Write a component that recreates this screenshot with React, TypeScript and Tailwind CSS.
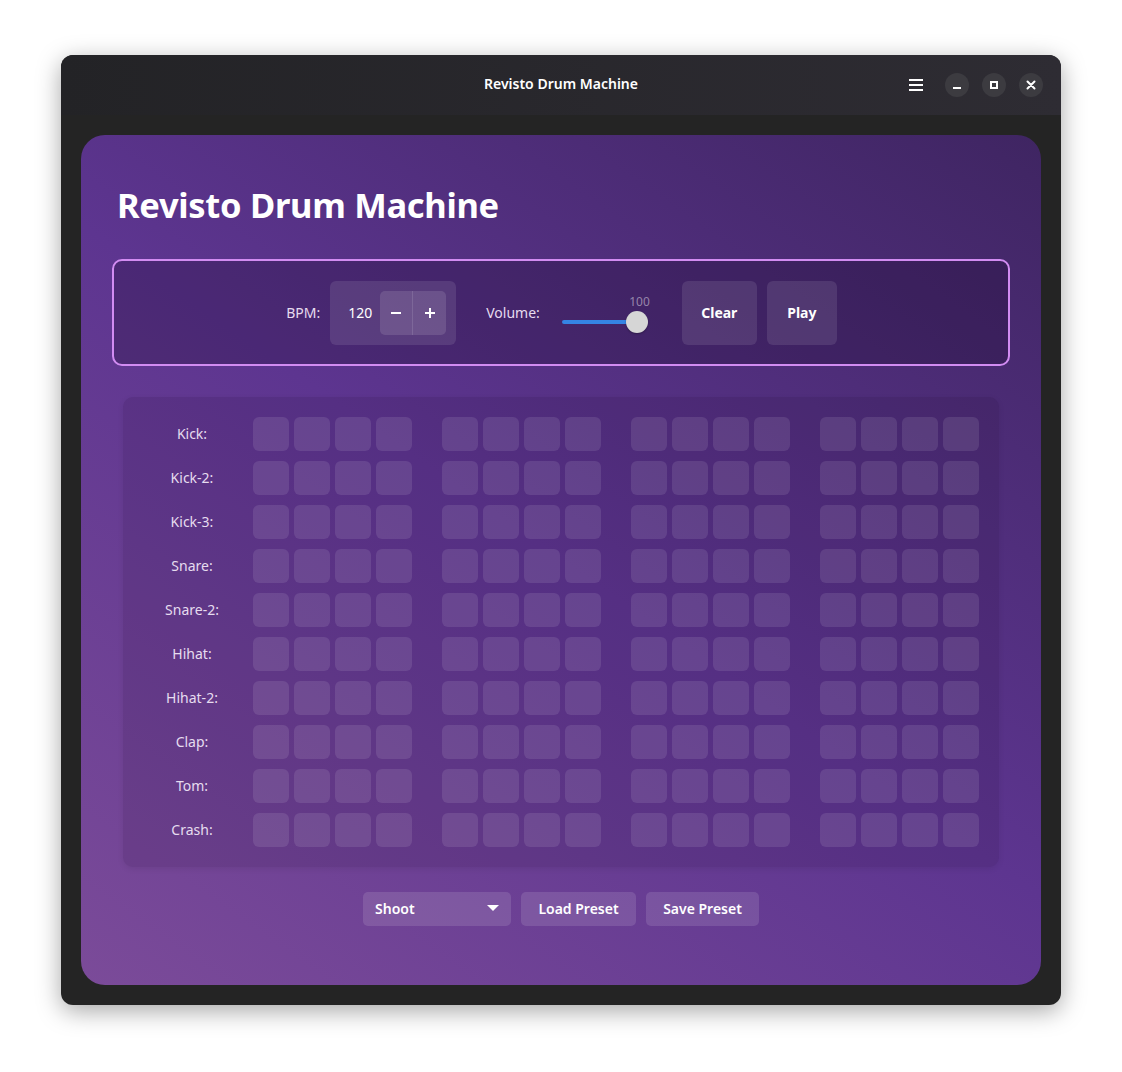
import React from "react";

const rows = ["Kick", "Kick-2", "Kick-3", "Snare", "Snare-2", "Hihat", "Hihat-2", "Clap", "Tom", "Crash"];

export default function App() {
  return (
    <div
      className="w-[1122px] h-[1072px] bg-white pt-[55px] pl-[61px]"
      style={{ fontFamily: '"Noto Sans", "Open Sans", sans-serif' }}
    >
      <div className="w-[1000px] h-[950px] rounded-[12px] bg-[#242424] shadow-[0_6px_24px_rgba(0,0,0,0.35)] flex flex-col overflow-hidden">
        {/* header bar */}
        <div className="h-[60px] bg-[linear-gradient(90deg,#232326,#2e2c33)] relative flex items-center justify-center pb-[3px]">
          <span className="text-white text-[14px] font-semibold">Revisto Drum Machine</span>
          <div className="absolute right-[18px] top-0 h-full flex items-center gap-[13px]">
            <div className="w-[24px] h-[24px] flex flex-col justify-center items-center gap-[3px] mr-[4px]">
              <div className="w-[14px] h-[2px] bg-white" />
              <div className="w-[14px] h-[2px] bg-white" />
              <div className="w-[14px] h-[2px] bg-white" />
            </div>
            <div className="w-[24px] h-[24px] rounded-full bg-[#3c3b40] flex items-center justify-center">
              <div className="w-[8px] h-[2px] bg-white mt-[6px]" />
            </div>
            <div className="w-[24px] h-[24px] rounded-full bg-[#3c3b40] flex items-center justify-center">
              <div className="w-[8px] h-[8px] border-2 border-white" />
            </div>
            <div className="w-[24px] h-[24px] rounded-full bg-[#3c3b40] flex items-center justify-center">
              <svg width="10" height="10" viewBox="0 0 10 10">
                <path d="M1.5 1.5 L8.5 8.5 M8.5 1.5 L1.5 8.5" stroke="white" strokeWidth="2" strokeLinecap="round" />
              </svg>
            </div>
          </div>
        </div>
        {/* body */}
        <div className="flex-1 p-[20px]">
          <div className="h-full rounded-[24px] bg-[linear-gradient(215deg,#3f2562_0%,#5d3590_50%,#7b4b99_100%)] px-[31px] pt-[48px]">
            <h1 className="text-white text-[34.5px] font-bold leading-[44px] pl-[5px] tracking-[-0.3px]">Revisto Drum Machine</h1>
            <div className="mt-[32px] h-[107px] rounded-[10px] border-2 border-[#d28cf2] bg-[rgba(20,5,35,0.25)] flex items-center justify-center pl-[1px]">
              <span className="text-[#e6dcef] text-[14px] mr-[10px]">BPM:</span>
              <div className="h-[64px] rounded-[6px] bg-[rgba(255,255,255,0.1)] flex items-center px-[10px]">
                <span className="text-white text-[14px] w-[40px] text-center">120</span>
                <div className="flex h-[44px] rounded-[5px] overflow-hidden">
                  <div className="w-[33px] bg-[rgba(255,255,255,0.12)] flex items-center justify-center border-r border-[rgba(255,255,255,0.12)]">
                    <div className="w-[10px] h-[2px] bg-white" />
                  </div>
                  <div className="w-[33px] bg-[rgba(255,255,255,0.12)] flex items-center justify-center relative">
                    <div className="w-[10px] h-[2px] bg-white" />
                    <div className="absolute w-[2px] h-[10px] bg-white" />
                  </div>
                </div>
              </div>
              <span className="text-[#e6dcef] text-[14px] ml-[30px]">Volume:</span>
              <div className="relative w-[86px] h-[64px] ml-[22px] mr-[34px]">
                <span className="absolute right-[-2px] top-[15px] text-[12px] text-[rgba(255,255,255,0.45)] leading-none">100</span>
                <div className="absolute left-0 right-[10px] top-[39px] h-[4px] rounded-full bg-[#3584e4]" />
                <div className="absolute right-0 top-[30px] w-[22px] h-[22px] rounded-full bg-[#d6d6d6] shadow-[0_1px_2px_rgba(0,0,0,0.3)]" />
              </div>
              <button className="w-[75px] h-[64px] rounded-[6px] bg-[rgba(255,255,255,0.1)] text-white text-[14px] font-bold">Clear</button>
              <button className="w-[70px] h-[64px] rounded-[6px] bg-[rgba(255,255,255,0.1)] text-white text-[14px] font-bold ml-[10px]">Play</button>
            </div>
            <div className="mt-[31px] mx-[11px] rounded-[10px] bg-[rgba(30,10,50,0.13)] p-[20px] shadow-[0_2px_6px_rgba(0,0,0,0.08)] flex flex-col gap-[10px]">
              {rows.map((r) => (
                <div key={r} className="flex items-center h-[34px]">
                  <span className="w-[98px] text-center text-[14px] text-[#e6dcef] mr-[12px] pb-[2px]">{r}:</span>
                  <div className="flex gap-[30px]">
                    {[0, 1, 2, 3].map((g) => (
                      <div key={g} className="flex gap-[5px]">
                        {[0, 1, 2, 3].map((c) => (
                          <div key={c} className="w-[36px] h-[34px] rounded-[6px] bg-[rgba(255,255,255,0.1)]" />
                        ))}
                      </div>
                    ))}
                  </div>
                </div>
              ))}
            </div>
            <div className="mt-[25px] flex justify-center gap-[10px]">
              <div className="w-[148px] h-[34px] rounded-[5px] bg-[rgba(255,255,255,0.12)] flex items-center justify-between px-[12px] pb-[1px]">
                <span className="text-white text-[14px] font-semibold">Shoot</span>
                <svg width="12" height="7" viewBox="0 0 12 7">
                  <path d="M0 0 L12 0 L6 6 Z" fill="white" />
                </svg>
              </div>
              <button className="w-[115px] h-[34px] rounded-[5px] bg-[rgba(255,255,255,0.12)] text-white text-[14px] font-semibold pb-[1px]">Load Preset</button>
              <button className="w-[113px] h-[34px] rounded-[5px] bg-[rgba(255,255,255,0.12)] text-white text-[14px] font-semibold pb-[1px]">Save Preset</button>
            </div>
          </div>
        </div>
      </div>
    </div>
  );
}
